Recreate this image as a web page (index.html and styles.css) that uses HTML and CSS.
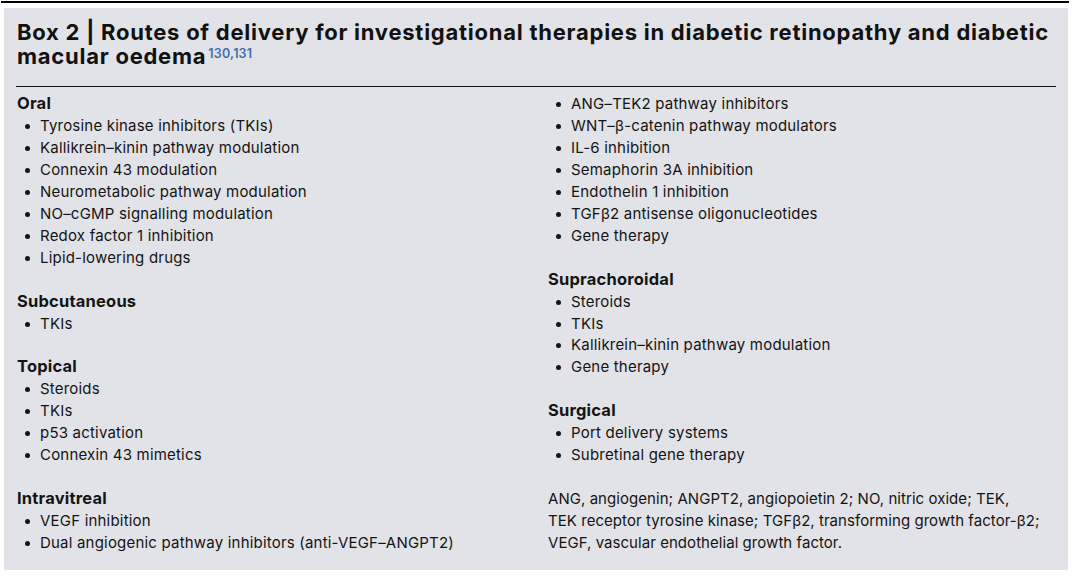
FILE: index.html
```html
<!DOCTYPE html>
<html>
<head>
<meta charset="utf-8">
<link rel="stylesheet" href="styles.css">
</head>
<body>
<div class="rule"></div>
<div class="box">
  <h1 class="title">Box 2 | Routes of delivery for investigational therapies in diabetic retinopathy and diabetic macular oedema<sup class="ref">130,131</sup></h1>
  <div class="divider"></div>
  <div class="cols">
    <div class="col">
      <div class="sec">
        <h2 class="head">Oral</h2>
        <ul class="list">
          <li>Tyrosine kinase inhibitors (TKIs)</li>
          <li>Kallikrein–kinin pathway modulation</li>
          <li>Connexin 43 modulation</li>
          <li>Neurometabolic pathway modulation</li>
          <li>NO–cGMP signalling modulation</li>
          <li>Redox factor 1 inhibition</li>
          <li>Lipid-lowering drugs</li>
        </ul>
      </div>
      <div class="sec">
        <h2 class="head">Subcutaneous</h2>
        <ul class="list">
          <li>TKIs</li>
        </ul>
      </div>
      <div class="sec">
        <h2 class="head">Topical</h2>
        <ul class="list">
          <li>Steroids</li>
          <li>TKIs</li>
          <li>p53 activation</li>
          <li>Connexin 43 mimetics</li>
        </ul>
      </div>
      <div class="sec">
        <h2 class="head">Intravitreal</h2>
        <ul class="list">
          <li>VEGF inhibition</li>
          <li>Dual angiogenic pathway inhibitors (anti-VEGF–ANGPT2)</li>
        </ul>
      </div>
    </div>
    <div class="col">
      <div class="sec">
        <ul class="list">
          <li>ANG–TEK2 pathway inhibitors</li>
          <li>WNT–β-catenin pathway modulators</li>
          <li>IL-6 inhibition</li>
          <li>Semaphorin 3A inhibition</li>
          <li>Endothelin 1 inhibition</li>
          <li>TGFβ2 antisense oligonucleotides</li>
          <li>Gene therapy</li>
        </ul>
      </div>
      <div class="sec">
        <h2 class="head">Suprachoroidal</h2>
        <ul class="list">
          <li>Steroids</li>
          <li>TKIs</li>
          <li>Kallikrein–kinin pathway modulation</li>
          <li>Gene therapy</li>
        </ul>
      </div>
      <div class="sec">
        <h2 class="head">Surgical</h2>
        <ul class="list">
          <li>Port delivery systems</li>
          <li>Subretinal gene therapy</li>
        </ul>
      </div>
      <div class="sec">
        <p class="note">ANG, angiogenin; ANGPT2, angiopoietin 2; NO, nitric oxide; TEK,<br>TEK receptor tyrosine kinase; TGFβ2, transforming growth factor-β2;<br>VEGF, vascular endothelial growth factor.</p>
      </div>
    </div>
  </div>
</div>
</body>
</html>
```

FILE: styles.css
```css
html, body {
  margin: 0;
  padding: 0;
  background: #ffffff;
}
body {
  font-family: Inter, "Noto Sans", "Liberation Sans", sans-serif;
  color: #141414;
  width: 1074px;
  height: 576px;
  overflow: hidden;
}
.rule {
  margin: 1px 0 0 1px;
  width: 1068px;
  height: 2px;
  background: #000000;
}
.box {
  margin: 5px 0 0 4px;
  width: 1064px;
  height: 562px;
  background: #e2e3e8;
  box-sizing: border-box;
  padding: 13px 12px 0 13px;
}
.title {
  margin: 0;
  font-size: 22px;
  line-height: 23.5px;
  font-weight: 700;
  letter-spacing: 0.75px;
  color: #111111;
}
.ref {
  font-size: 12.5px;
  font-weight: 600;
  letter-spacing: 0.2px;
  color: #3d6fa8;
  vertical-align: 0;
  position: relative;
  top: -6px;
  line-height: 0;
  margin-left: 2px;
}
.divider {
  margin-top: 18px;
  height: 1px;
  background: #111111;
  width: 1040px;
  margin-left: -1px;
}
.cols {
  display: grid;
  grid-template-columns: 531px 1fr;
  margin-top: 6px;
}
.sec + .sec {
  margin-top: 21.95px;
}
.head {
  margin: 0;
  font-size: 16.5px;
  font-weight: 700;
  letter-spacing: 0.2px;
  line-height: 21.95px;
}
.list {
  margin: 0;
  padding: 0;
  list-style: none;
}
.list li {
  font-size: 15px;
  line-height: 21.95px;
  letter-spacing: 0.2px;
  padding-left: 23px;
  position: relative;
}
.list li::before {
  content: "";
  position: absolute;
  left: 8px;
  top: 9px;
  width: 5px;
  height: 5px;
  border-radius: 50%;
  background: #141414;
}
.note {
  margin: 0;
  font-size: 15px;
  line-height: 21.95px;
  letter-spacing: 0.05px;
}
```
